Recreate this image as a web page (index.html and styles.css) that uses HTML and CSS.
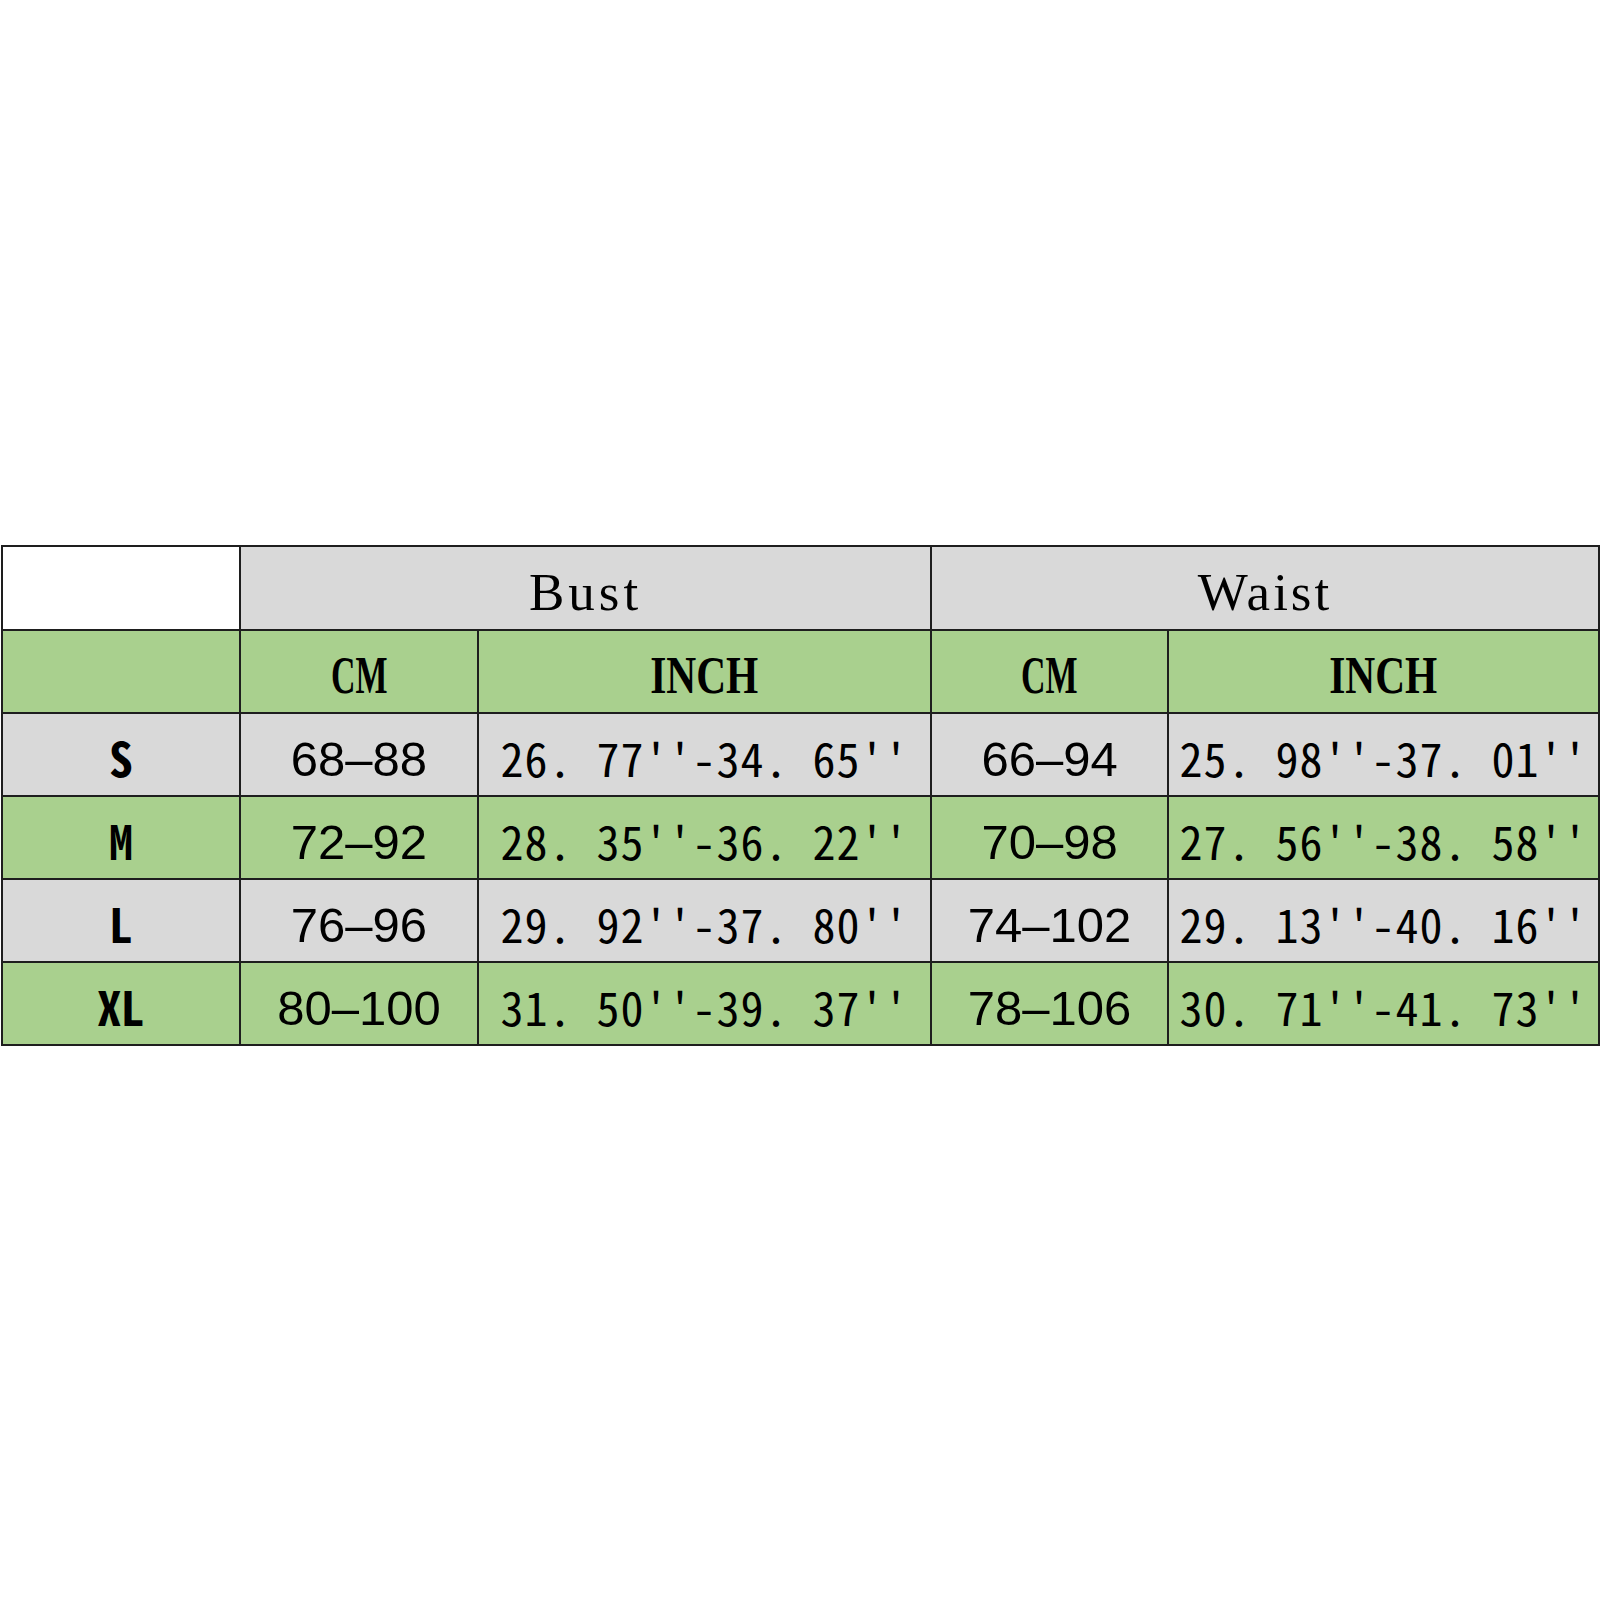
FILE: index.html
```html
<!DOCTYPE html>
<html lang="en">
<head>
<meta charset="utf-8">
<title>Size Chart</title>
<link rel="stylesheet" href="styles.css">
</head>
<body>
<div class="page">
  <table class="chart">
    <colgroup>
      <col class="c-size">
      <col class="c-cm">
      <col class="c-inch">
      <col class="c-cm2">
      <col class="c-inch2">
    </colgroup>
    <tr class="row-grey row-head">
      <td class="blank"></td>
      <td colspan="2"><span class="hdr">Bust</span></td>
      <td colspan="2"><span class="hdr hdr-waist">Waist</span></td>
    </tr>
    <tr class="row-green">
      <td></td>
      <td><span class="unit unit-cm">CM</span></td>
      <td><span class="unit unit-inch">INCH</span></td>
      <td><span class="unit unit-cm">CM</span></td>
      <td><span class="unit unit-inch">INCH</span></td>
    </tr>
    <tr class="row-grey">
      <td class="lbl">S</td>
      <td class="cm">68–88</td>
      <td class="inch">26.&#160;77''-34.&#160;65''</td>
      <td class="cm">66–94</td>
      <td class="inch">25.&#160;98''-37.&#160;01''</td>
    </tr>
    <tr class="row-green">
      <td class="lbl">M</td>
      <td class="cm">72–92</td>
      <td class="inch">28.&#160;35''-36.&#160;22''</td>
      <td class="cm">70–98</td>
      <td class="inch">27.&#160;56''-38.&#160;58''</td>
    </tr>
    <tr class="row-grey">
      <td class="lbl">L</td>
      <td class="cm">76–96</td>
      <td class="inch">29.&#160;92''-37.&#160;80''</td>
      <td class="cm">74–102</td>
      <td class="inch">29.&#160;13''-40.&#160;16''</td>
    </tr>
    <tr class="row-green">
      <td class="lbl">XL</td>
      <td class="cm">80–100</td>
      <td class="inch">31.&#160;50''-39.&#160;37''</td>
      <td class="cm">78–106</td>
      <td class="inch">30.&#160;71''-41.&#160;73''</td>
    </tr>
  </table>
</div>
</body>
</html>
```
FILE: styles.css
```css
html, body {
  margin: 0;
  padding: 0;
  background: #ffffff;
}

.page {
  width: 1600px;
  height: 1600px;
  padding-top: 545px;
  padding-left: 1px;
  box-sizing: border-box;
}

.chart {
  border-collapse: collapse;
  table-layout: fixed;
  width: 1597px;
  color: #000;
}

.c-size { width: 238px; }
.c-cm { width: 238px; }
.c-inch { width: 453px; }
.c-cm2 { width: 237px; }
.c-inch2 { width: 431px; }

.chart td {
  border: 2px solid #1e1e1e;
  height: 73px;
  padding: 8px 0 0 0;
  text-align: center;
  vertical-align: middle;
  white-space: nowrap;
  overflow: visible;
  line-height: 1;
}

.chart .row-head td { height: 74px; }

.row-grey td { background: #d9d9d9; }
.row-green td { background: #a9d08e; }
.row-grey td.blank { background: #ffffff; }

.hdr {
  display: inline-block;
  font-family: "Liberation Serif", "Times New Roman", serif;
  font-size: 53px;
  letter-spacing: 4px;
}
.hdr-waist { letter-spacing: 3px; }

.unit {
  display: inline-block;
  font-family: "Liberation Serif", "Times New Roman", serif;
  font-size: 53px;
  font-weight: 700;
}
.unit-cm { transform: scaleX(0.64); }
.unit-inch { transform: scaleX(0.78); }

.chart td.lbl {
  font-family: "Noto Sans Mono CJK SC", "DejaVu Sans Mono", monospace;
  font-size: 47px;
  font-weight: 700;
  height: 77px;
  padding-top: 4px;
}

.chart td.cm {
  font-family: "Liberation Sans", Arial, sans-serif;
  font-size: 49px;
  height: 71px;
  padding-top: 10px;
}

.chart td.inch {
  font-family: "Noto Sans Mono CJK SC", "DejaVu Sans Mono", monospace;
  font-size: 46px;
  letter-spacing: 1px;
  height: 77px;
  padding-top: 4px;
}
```
